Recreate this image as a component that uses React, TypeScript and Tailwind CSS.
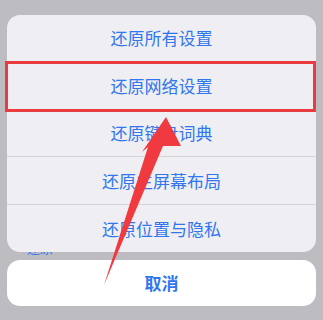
import React from "react";

const rows = [
  { label: "还原所有设置", h: "h-[47px]" },
  { label: "还原网络设置", h: "h-[48px]" },
  { label: "还原键盘词典", h: "h-[47px]" },
  { label: "还原主屏幕布局", h: "h-[48px]" },
  { label: "还原位置与隐私", h: "h-[47px]" },
];

export default function App() {
  return (
    <div
      className="relative w-[323px] h-[320px] overflow-hidden bg-[#bdbdc1] pt-[15px] px-[7px]"
      style={{ fontFamily: '"Noto Sans CJK SC", "Noto Sans", sans-serif' }}
    >
      <span className="absolute left-[27px] top-[241px] text-[13px] leading-[14px] text-[#3478f6]">
        还原
      </span>
      <div className="relative flex flex-col rounded-[13px] bg-[#efeff3] overflow-hidden">
        {rows.map((r, i) => (
          <div
            key={r.label}
            className={`${r.h} flex items-center justify-center text-[17px] text-[#3176ee] ${
              i < rows.length - 1 ? "border-b border-[#d3d3d7]" : ""
            }`}
          >
            {r.label}
          </div>
        ))}
      </div>
      <div className="relative mt-[8px] h-[46px] rounded-[13px] bg-white flex items-center justify-center text-[17px] font-semibold text-[#3176ee]">
        取消
      </div>
      <div className="absolute left-[5px] top-[61px] w-[311px] h-[51px] border-[3px] border-[#ea3c40]" />
      <svg className="absolute left-0 top-0" width="323" height="320" viewBox="0 0 323 320">
        <path
          d="M166 117 L181 146 L163 146 L104 285 L148 147 L142 152 Z"
          fill="#f03a3f"
        />
      </svg>
    </div>
  );
}
